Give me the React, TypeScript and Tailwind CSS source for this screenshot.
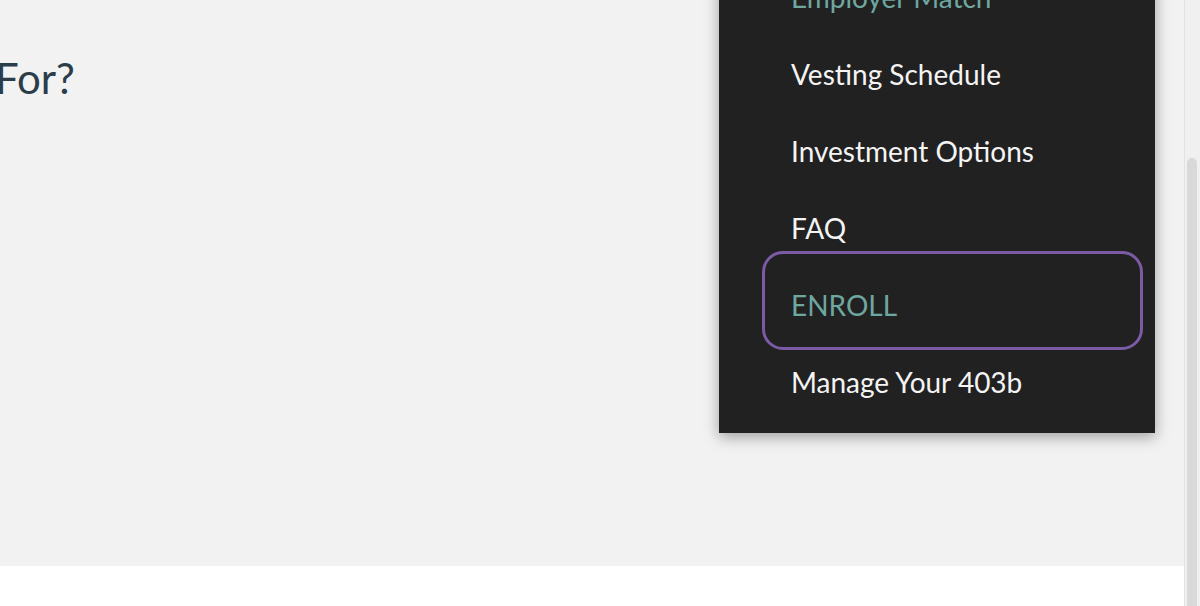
import React from 'react';

interface MenuItemProps {
  label: string;
  active?: boolean;
  focused?: boolean;
}

const MenuItem: React.FC<MenuItemProps> = ({ label, active, focused }) => (
  <li>
    <a
      href="#"
      className={
        focused
          ? 'flex h-[77px] w-[359px] items-center rounded-[10px] pl-[18px] pt-[9px] text-[28px] text-[#6ea7a0] no-underline outline-3 outline-offset-[8px] outline-[#7b5aa6]'
          : active
            ? 'flex h-[77px] w-[359px] items-center pl-[18px] pt-[9px] text-[28px] text-[#6ea7a0] no-underline'
            : 'flex h-[77px] w-[359px] items-center pl-[18px] pt-[9px] text-[28px] text-[#f4f4f4] no-underline'
      }
    >
      {label}
    </a>
  </li>
);

const items = [
  { label: 'Employer Match', active: true },
  { label: 'Vesting Schedule' },
  { label: 'Investment Options' },
  { label: 'FAQ' },
  { label: 'ENROLL', focused: true },
  { label: 'Manage Your 403b' },
];

export default function App() {
  return (
    <div className="flex h-[606px] w-[1200px] overflow-hidden bg-white font-['Lato','Noto_Sans',sans-serif]">
      <main className="relative flex w-[1184px] flex-col">
        <section className="h-[566px] overflow-hidden bg-[#f2f2f2] pt-[48px]">
          <h2 className="-ml-[5px] whitespace-nowrap text-[42px] leading-[60px] text-[#2c3d4a]">For?</h2>
        </section>
        <section className="flex-1 bg-white" />

        <nav className="absolute left-[719px] top-[-46px] w-[436px] bg-[#212121] pb-[17px] pl-[54px] shadow-[0_4px_14px_rgba(0,0,0,0.35)]">
          <ul>
            {items.map((item) => (
              <MenuItem key={item.label} {...item} />
            ))}
          </ul>
        </nav>
      </main>

      <div className="relative w-[16px] border-l border-[#e2e2e2] bg-[#f0f0f0]">
        <div className="absolute left-[2px] right-[3px] top-[158px] bottom-0 rounded-t-[6px] bg-[#d9d9d9]" />
      </div>
    </div>
  );
}
